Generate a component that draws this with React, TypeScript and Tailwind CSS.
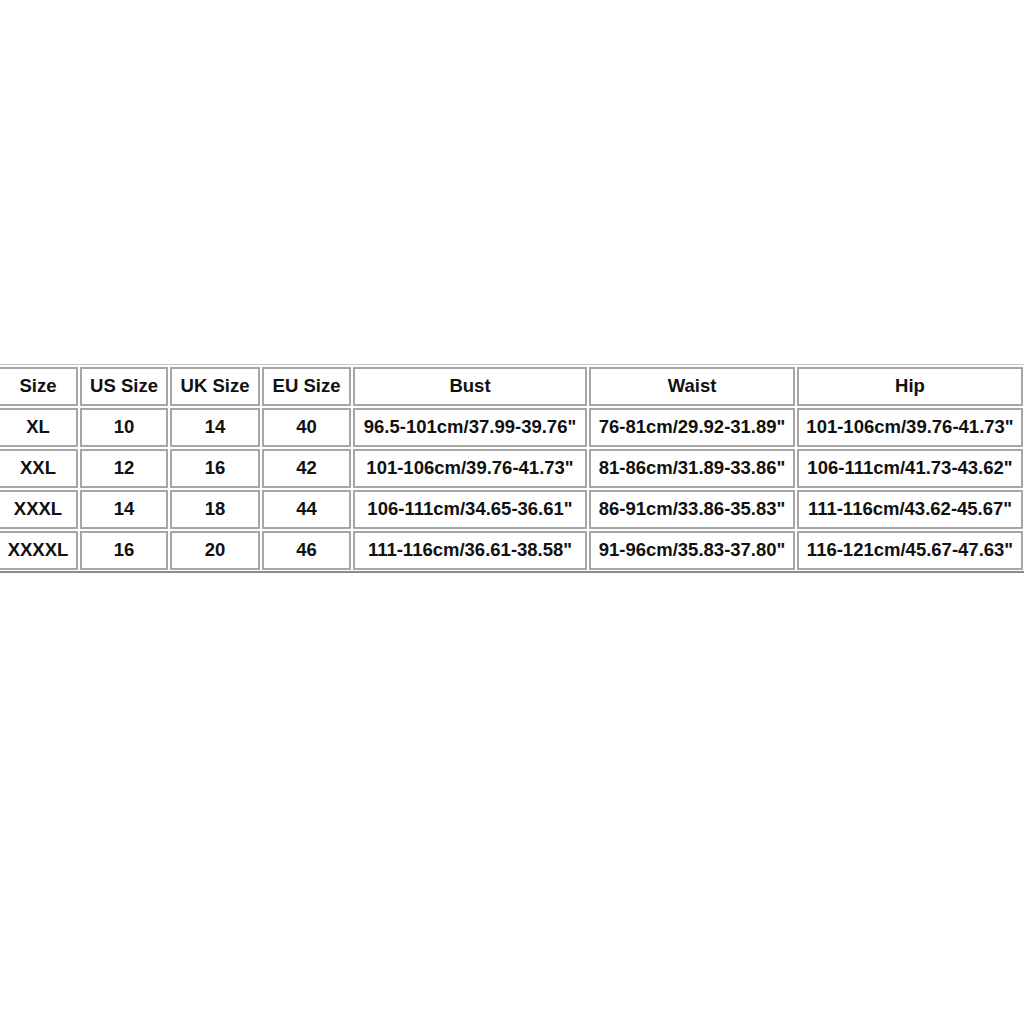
import React from "react";

const header = ["Size", "US Size", "UK Size", "EU Size", "Bust", "Waist", "Hip"];
const rows = [
  ["XL", "10", "14", "40", '96.5-101cm/37.99-39.76"', '76-81cm/29.92-31.89"', '101-106cm/39.76-41.73"'],
  ["XXL", "12", "16", "42", '101-106cm/39.76-41.73"', '81-86cm/31.89-33.86"', '106-111cm/41.73-43.62"'],
  ["XXXL", "14", "18", "44", '106-111cm/34.65-36.61"', '86-91cm/33.86-35.83"', '111-116cm/43.62-45.67"'],
  ["XXXXL", "16", "20", "46", '111-116cm/36.61-38.58"', '91-96cm/35.83-37.80"', '116-121cm/45.67-47.63"'],
];

function Cell({ text }: { text: string }) {
  return (
    <div className="h-[39px] border-2 border-[#a6a6a6] bg-white flex items-center justify-center whitespace-nowrap text-[18.5px] font-bold text-[#111111] leading-none">
      {text}
    </div>
  );
}

export default function App() {
  const all = [header, ...rows];
  return (
    <div className="w-[1024px] h-[1024px] bg-white overflow-hidden" style={{ fontFamily: '"Liberation Sans", Arial, sans-serif' }}>
      <div className="mt-[364px] ml-[-4px] w-[1034px] border-t border-t-[#c8c8c8] border-b-2 border-b-[#8c8c8c] pt-[2px] pb-[1px] pl-[2px]">
        <div className="grid grid-cols-[80px_88px_90px_89px_234px_206px_226px] gap-[2px]">
          {all.map((r, i) =>
            r.map((t, j) => <Cell key={`${i}-${j}`} text={t} />)
          )}
        </div>
      </div>
    </div>
  );
}
